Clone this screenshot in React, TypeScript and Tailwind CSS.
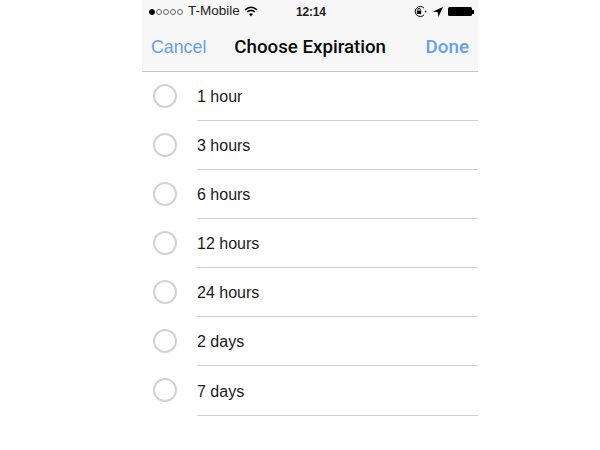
import React from "react";

const options = ["1 hour", "3 hours", "6 hours", "12 hours", "24 hours", "2 days", "7 days"];

function StatusBar() {
    return (
        <div className="flex h-[23px] items-center pl-[7px] pr-[4px] text-[13.5px] text-[#222]">
            <div className="flex w-[147px] items-center">
                <span className="mr-[1px] h-[6px] w-[6px] rounded-full border border-black bg-black" />
                {[0, 1, 2, 3].map(dot => (
                    <span key={dot} className="mr-[1px] h-[6px] w-[6px] rounded-full border border-[#666]" />
                ))}
                <span className="ml-[4px]">T-Mobile</span>
                <svg className="ml-[4px] mb-[1px]" width="14" height="11" viewBox="0 0 14 11">
                    <path d="M1 4 Q7 -1.5 13 4" fill="none" stroke="#000" strokeWidth="1.6" />
                    <path d="M3.2 6 Q7 2.6 10.8 6" fill="none" stroke="#000" strokeWidth="1.6" />
                    <path d="M5 8 Q7 6.4 9 8 L7 10.5 Z" fill="#000" />
                </svg>
            </div>
            <span className="text-[12px] font-bold tracking-[-0.2px]">12:14</span>
            <div className="flex flex-1 items-center justify-end">
                <svg width="16" height="13" viewBox="0 0 16 13">
                    <path d="M12 3.2 A5 5 0 1 0 12 9.8" fill="none" stroke="#000" strokeWidth="1" />
                    <circle cx="13.6" cy="6.5" r="0.9" fill="#000" />
                    <rect x="4.8" y="5.6" width="4.4" height="3.4" fill="#000" />
                    <path d="M5.7 5.6 V4.6 A1.3 1.3 0 0 1 8.3 4.6 V5.6" fill="none" stroke="#000" strokeWidth="0.9" />
                </svg>
                <svg className="ml-[5px]" width="10" height="10" viewBox="0 0 10 10">
                    <path d="M10 0 L0 4.6 L4.8 5.2 L5.4 10 Z" fill="#000" />
                </svg>
                <div className="ml-[5px] h-[9px] w-[24px] rounded-[1.5px] bg-black" />
                <div className="h-[4px] w-[2px] bg-black" />
            </div>
        </div>
    );
}

export default function App() {
    return (
        <div className="h-[450px] w-[600px] bg-white pl-[142px] font-['Liberation_Sans',sans-serif]">
            <div className="w-[336px]">
                <div className="h-[72px] border-b border-[#c4c4c6] bg-[#f7f7f8]">
                    <StatusBar />
                    <div className="flex h-[48px] items-center pl-[9px] pr-[9px] pt-[1px] text-[17.8px]">
                        <span className="text-[#669ef0]">Cancel</span>
                        <span className="ml-[28px] font-['Roboto',sans-serif] text-[18.7px] font-medium text-[#0a0a0a]">Choose Expiration</span>
                        <span className="ml-auto font-['Roboto',sans-serif] text-[18.8px] font-medium text-[#669ef0]">Done</span>
                    </div>
                </div>
                <div>
                    {options.map((option, i) => (
                        <div key={option} className={i === options.length - 1 ? "flex h-[50px] items-center" : "flex h-[49px] items-center"}>
                            <div className="mb-[2px] ml-[11px] mr-[20px] h-[24px] w-[24px] shrink-0 rounded-full border-2 border-[#d2d2d2]" />
                            <div className="flex h-full flex-1 items-center border-b border-[#cfcfcf] pt-[2px] text-[16px] text-[#1a1a1a]">
                                {option}
                            </div>
                        </div>
                    ))}
                </div>
            </div>
        </div>
    );
}
